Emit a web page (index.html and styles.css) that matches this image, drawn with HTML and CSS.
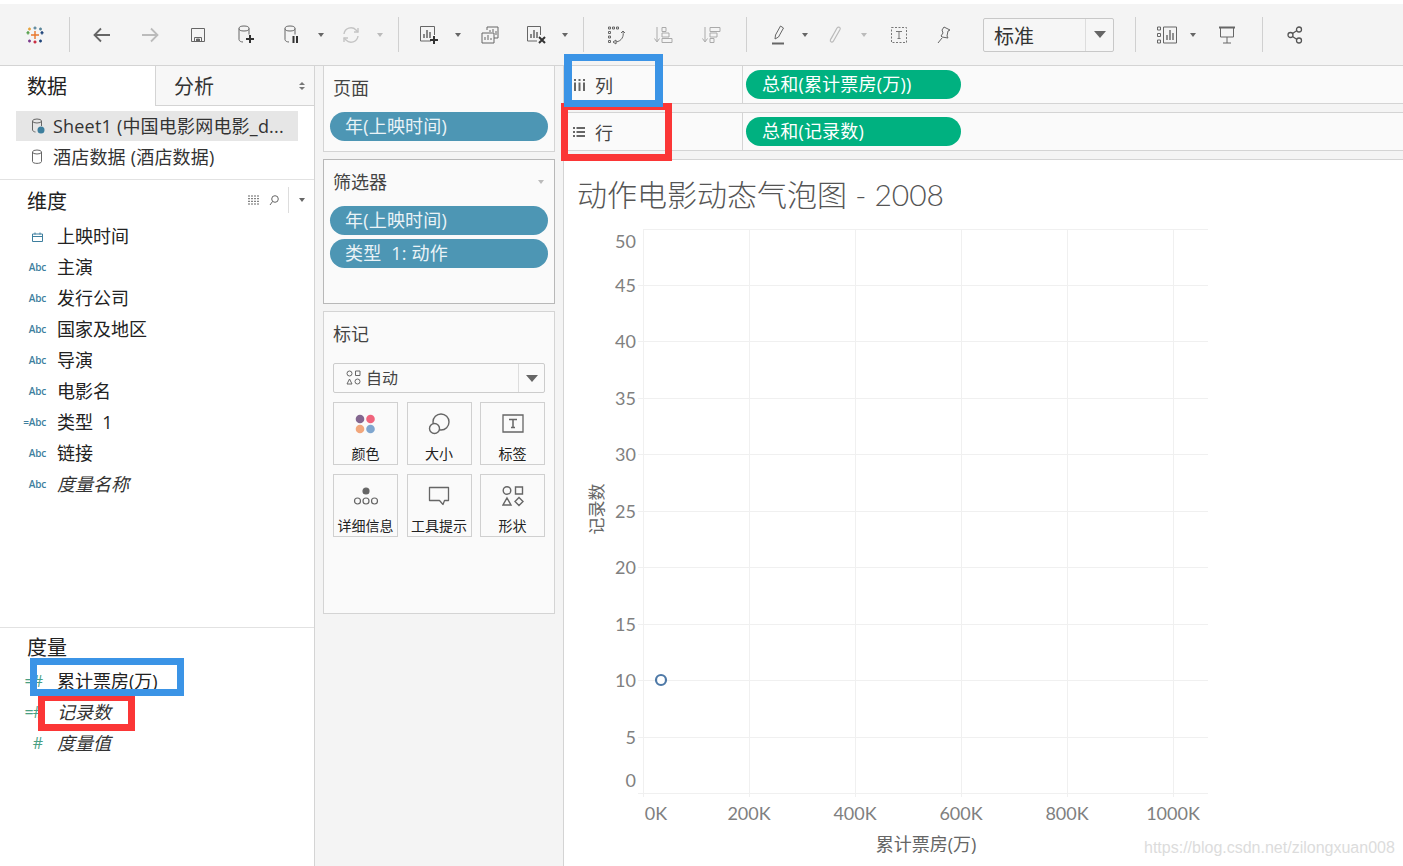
FILE: index.html
```html
<!DOCTYPE html>
<html lang="zh">
<head>
<meta charset="utf-8">
<title>动作电影动态气泡图 - 2008</title>
<link rel="stylesheet" href="styles.css">
</head>
<body>
<header class="toolbar">
  <span class="tb w48 first">
    <svg width="18" height="18" viewBox="0 0 18 18" fill="none" stroke-width="1.4"><path d="M9 5v8M5 9h8" stroke="#e8762b"/><path d="M9 0.5v3M7.5 2h3" stroke="#5b879b"/><path d="M9 14.500v3M7.500 16h3" stroke="#c72035"/><path d="M2 5v3.500M.5 6.700h3" stroke="#59a14f"/><path d="M16 5v3.500M14.500 6.700h3" stroke="#1f447a"/><path d="M3.500 1.500v3M2 3h3" stroke="#e8a33d"/><path d="M14.500 1.500v3M13 3h3" stroke="#5b879b"/><path d="M3.500 13.500v3M2 15h3" stroke="#7c3b8c"/><path d="M14.500 13.500v3M13 15h3" stroke="#1f447a"/></svg>
  </span>
  <i class="sep"></i>
  <span class="tb w48"><svg width="18" height="16" viewBox="0 0 18 16" fill="none" stroke="#666" stroke-width="1.800"><path d="M17 8H2M8 1.500 1.500 8 8 14.500"/></svg></span>
  <span class="tb w48"><svg width="18" height="16" viewBox="0 0 18 16" fill="none" stroke="#bbb" stroke-width="1.800"><path d="M1 8h15M10 1.500 16.500 8 10 14.500"/></svg></span>
  <span class="tb w48"><svg width="16" height="16" viewBox="0 0 16 16" fill="none" stroke="#666"><path d="M1.500 1.500h13v13h-13z"/><path d="M4.500 14.500v-4h7v4"/><path d="M6.500 12h3v2.500h-3z" fill="#666"/></svg></span>
  <span class="tb w48"><svg width="18" height="20" viewBox="0 0 18 20" fill="none" stroke="#666"><ellipse cx="7" cy="3.500" rx="5" ry="2.500"/><path d="M2 3.500v11c0 1.500 2 2.500 4 2.500M12 3.500v6"/><path d="M13 10v8M9 14h8" stroke="#333" stroke-width="2"/></svg></span>
  <span class="tb w43"><svg width="18" height="20" viewBox="0 0 18 20" fill="none" stroke="#666"><ellipse cx="7" cy="3.500" rx="5" ry="2.500"/><path d="M2 3.500v11c0 1.500 2 2.500 4 2.500M12 3.500v6"/><path d="M10.500 11v7M14 11v7" stroke="#333" stroke-width="2"/></svg></span>
  <span class="caret-slot"><i class="caret"></i></span>
  <span class="tb w43"><svg width="18" height="18" viewBox="0 0 18 18" fill="none" stroke="#c4c4c4" stroke-width="1.400"><path d="M2 8a7 7 0 0 1 12-4l2 2M16 10a7 7 0 0 1-12 4l-2-2"/><path d="M16 2v4h-4M2 16v-4h4"/></svg></span>
  <span class="caret-slot"><i class="caret light"></i></span>
  <i class="sep"></i>
  <span class="tb w43"><svg width="20" height="20" viewBox="0 0 20 20" fill="none" stroke="#666"><path d="M12 16H1.500V1.500h14V10"/><path d="M5 13V9M8 13V5M11 13V7" stroke-width="1.500"/><path d="M15 11v8M11 15h8" stroke="#333" stroke-width="2"/></svg></span>
  <span class="caret-slot"><i class="caret"></i></span>
  <span class="tb w48"><svg width="18" height="18" viewBox="0 0 18 18" fill="none" stroke="#666"><path d="M6 4V1h11v11h-4"/><path d="M1 7h12v10H1z" fill="#f4f4f4"/><path d="M9 6V4M12 6V3M15 9V5" stroke-width="1"/><path d="M4 14v-3M7 14v-5M10 14v-2"/></svg></span>
  <span class="tb w43"><svg width="20" height="20" viewBox="0 0 20 20" fill="none" stroke="#666"><path d="M11 16H1.500V1.500h13V10"/><path d="M5 13V9M8 13V5M11 13V7" stroke-width="1.500"/><path d="M13 12l6 6M19 12l-6 6" stroke="#333" stroke-width="2"/></svg></span>
  <span class="caret-slot"><i class="caret"></i></span>
  <i class="sep"></i>
  <span class="tb w48"><svg width="20" height="20" viewBox="0 0 20 20" fill="none" stroke="#666"><path d="M2.500 2h2v2h-2zM6.500 2h2v2h-2zM10.500 2h2v2h-2zM2.500 6.500h2v2h-2zM2.500 11h2v2h-2zM2.500 15.500h2v2h-2z"/><path d="M17 7c1 4-1 9-7 10M7 17l3-2v4z"/><path d="M15 8l2-2 2 2"/></svg></span>
  <span class="tb w48"><svg width="20" height="20" viewBox="0 0 20 20" fill="none" stroke="#aaa"><path d="M3 2v14M.5 13.500 3 17l2.500-3.500"/><path d="M8 2.500h4v4H8zM8 8h7v4H8zM8 13.500h10v4H8z"/></svg></span>
  <span class="tb w48"><svg width="20" height="20" viewBox="0 0 20 20" fill="none" stroke="#aaa"><path d="M3 2v14M.5 13.500 3 17l2.500-3.500"/><path d="M8 2.500h10v4H8zM8 8h7v4H8zM8 13.500h4v4H8z"/></svg></span>
  <i class="sep"></i>
  <span class="tb w38 ml4"><svg width="14" height="20" viewBox="0 0 14 20" fill="none" stroke="#666"><path d="M9.500 1l3 2-5 9-3.500 2 .5-4z"/><path d="M1 18.500h12" stroke-width="2"/></svg></span>
  <span class="caret-slot"><i class="caret"></i></span>
  <span class="tb w43"><svg width="14" height="20" viewBox="0 0 14 20" fill="none" stroke="#bbb" stroke-width="1.200"><path d="M3 14l6-11c1.500-2 4 -.5 3 1.500L5.500 16c-1 2-4 1-3-1.500L8 5"/></svg></span>
  <span class="caret-slot"><i class="caret light"></i></span>
  <span class="tb w54"><svg width="16" height="16" viewBox="0 0 16 16" fill="none" stroke="#777"><path d="M.5.500h15v15H.5z" stroke-dasharray="2 1.500"/><path d="M5 4.500h6M8 4.500v7M6.500 11.500h3"/></svg></span>
  <span class="tb w36"><svg width="14" height="18" viewBox="0 0 14 18" fill="none" stroke="#666"><path d="M7 1l6 3-2 1-1 5 1 2-6-1-1-1 2-3-1-3zM5 12l-4 5"/></svg></span>
  <div class="combo"><span class="combo-text">标准</span><span class="combo-arrow"><i class="caret big"></i></span></div>
  <i class="sep sep-wide"></i>
  <span class="tb w36 ml5"><svg width="20" height="18" viewBox="0 0 20 18" fill="none" stroke="#666"><path d="M.5 1h3v3h-3zM.5 7.500h3v3h-3zM.5 14h3v3h-3z"/><path d="M6.500 1h13v16h-13z"/><path d="M10 14V9M13 14V4M16 14V7" stroke-width="1.400"/></svg></span>
  <span class="caret-slot"><i class="caret"></i></span>
  <span class="tb w52"><svg width="18" height="18" viewBox="0 0 18 18" fill="none" stroke="#666"><path d="M1 1.500h16" stroke-width="2"/><path d="M2.500 2v9h13V2M9 11v6M5 17h8"/></svg></span>
  <i class="sep sep-9"></i>
  <span class="tb w48"><svg width="16" height="18" viewBox="0 0 16 18" fill="none" stroke="#555" stroke-width="1.300"><circle cx="3.500" cy="9" r="2.500"/><circle cx="12" cy="3.500" r="2.500"/><circle cx="12" cy="14.500" r="2.500"/><path d="M5.500 7.500l4.500-3M5.500 10.500l4.500 3"/></svg></span>
</header>

<main class="workspace">
  <aside class="data-pane">
    <div class="tabs">
      <div class="tab active">数据</div>
      <div class="tab inactive">分析<i class="updown"></i></div>
    </div>
    <div class="sources">
      <div class="source selected">
        <svg class="db" width="14" height="16" viewBox="0 0 14 16" fill="none" stroke="#666"><ellipse cx="6" cy="3" rx="4.500" ry="2"/><path d="M1.500 3v9c0 1 2 2 3 2M10.500 3v5"/><circle cx="10" cy="12" r="3.500" fill="#3e7f9e" stroke="none"/></svg>
        <span>Sheet1 (中国电影网电影_d...</span>
      </div>
      <div class="source">
        <svg class="db" width="14" height="16" viewBox="0 0 14 16" fill="none" stroke="#666"><ellipse cx="6" cy="3" rx="4.500" ry="2"/><path d="M1.500 3v9.500c0 2.500 9 2.500 9 0V3"/></svg>
        <span>酒店数据 (酒店数据)</span>
      </div>
    </div>
    <section class="dims">
      <div class="sec-head">
        <span>维度</span>
        <span class="sec-tools">
          <svg width="12" height="10" viewBox="0 0 12 10" fill="none" stroke="#666" stroke-dasharray="2 1"><path d="M0 1h12M0 3.700h12M0 6.300h12M0 9h12"/></svg>
          <svg width="10" height="11" viewBox="0 0 10 11" fill="none" stroke="#666"><circle cx="6" cy="4" r="3.300"/><path d="M3.500 6.500 1 10"/></svg>
          <i class="tool-sep"></i>
          <i class="caret"></i>
        </span>
      </div>
      <ul class="fields">
        <li><span class="ficon date"><svg width="11" height="10" viewBox="0 0 11 10" fill="none" stroke="#3e7f9e"><path d="M.5 2h10v7.500H.5zM.5 4.500h10M3 .5v2M8 .5v2"/></svg></span>上映时间</li>
        <li><span class="ficon abc">Abc</span>主演</li>
        <li><span class="ficon abc">Abc</span>发行公司</li>
        <li><span class="ficon abc">Abc</span>国家及地区</li>
        <li><span class="ficon abc">Abc</span>导演</li>
        <li><span class="ficon abc">Abc</span>电影名</li>
        <li><span class="ficon abc">=Abc</span>类型&nbsp;&nbsp;1</li>
        <li><span class="ficon abc">Abc</span>链接</li>
        <li class="calc"><span class="ficon abc">Abc</span>度量名称</li>
      </ul>
    </section>
    <section class="measures">
      <div class="sec-head short"><span>度量</span></div>
      <ul class="fields">
        <li><span class="ficon hash">=#</span>累计票房(万)</li>
        <li class="calc"><span class="ficon hash">=#</span>记录数</li>
        <li class="calc"><span class="ficon hash">#</span>度量值</li>
      </ul>
    </section>
  </aside>

  <section class="cards">
    <div class="card card-pages">
      <h3>页面</h3>
      <div class="pill blue">年(上映时间)</div>
    </div>
    <div class="card card-filters">
      <h3>筛选器<i class="caret light card-caret"></i></h3>
      <div class="pill blue">年(上映时间)</div>
      <div class="pill blue">类型&nbsp; 1: 动作</div>
    </div>
    <div class="card card-marks">
      <h3>标记</h3>
      <div class="mark-type">
        <span class="mark-name">
          <svg width="15" height="15" viewBox="0 0 15 15" fill="none" stroke="#666"><circle cx="3.500" cy="3.500" r="2.500"/><path d="M9.500 1h4.500v4.500H9.500zM3.500 9 6 14H1z"/><circle cx="11.500" cy="11.500" r="2.500"/></svg>
          自动
        </span>
        <span class="mark-arrow"><i class="caret big"></i></span>
      </div>
      <div class="mark-grid">
        <div class="mark-btn">
          <svg width="22" height="20" viewBox="0 0 22 20"><circle cx="5" cy="5" r="4.300" fill="#83668f"/><circle cx="15.500" cy="5" r="4.300" fill="#f0647c"/><circle cx="5" cy="15" r="4.300" fill="#f2a77c"/><circle cx="15.500" cy="15" r="4.300" fill="#7fa6cf"/></svg>
          <span>颜色</span>
        </div>
        <div class="mark-btn">
          <svg width="22" height="22" viewBox="0 0 22 22" fill="none" stroke="#666" stroke-width="1.400"><circle cx="13" cy="9" r="8"/><circle cx="6.500" cy="15.500" r="5" fill="#fafafa"/></svg>
          <span>大小</span>
        </div>
        <div class="mark-btn">
          <svg width="22" height="20" viewBox="0 0 22 20" fill="none" stroke="#666" stroke-width="1.300"><path d="M1 1h20v17H1z"/><path d="M7 5.500h8M11 5.500v8M9 13.500h4" stroke-width="1.500"/></svg>
          <span>标签</span>
        </div>
        <div class="mark-btn">
          <svg width="26" height="20" viewBox="0 0 26 20" fill="none" stroke="#666" stroke-width="1.200"><circle cx="13" cy="5" r="3" fill="#666"/><circle cx="4.500" cy="15" r="3"/><circle cx="13" cy="15" r="3"/><circle cx="21.500" cy="15" r="3"/></svg>
          <span>详细信息</span>
        </div>
        <div class="mark-btn">
          <svg width="22" height="20" viewBox="0 0 22 20" fill="none" stroke="#666" stroke-width="1.300"><path d="M1.500 1.500h19v13h-4l-1.500 4-3.500-4h-10z" stroke-linejoin="round"/></svg>
          <span>工具提示</span>
        </div>
        <div class="mark-btn">
          <svg width="22" height="21" viewBox="0 0 22 21" fill="none" stroke="#666" stroke-width="1.400"><circle cx="5" cy="5" r="3.800"/><path d="M13.500 1.500h7v7h-7zM5 12.500l4 7H1zM17 12l4 4-4 4-4-4z"/></svg>
          <span>形状</span>
        </div>
      </div>
    </div>
  </section>

  <section class="view">
    <div class="shelf shelf-cols">
      <div class="shelf-label">
        <svg width="11" height="12" viewBox="0 0 11 12" fill="#666"><path d="M0 0h2v2H0zM0 3.500h2V12H0zM4.500 0h2v2h-2zM4.500 3.500h2V12h-2zM9 0h2v2H9zM9 3.500h2V12H9z"/></svg>
        <span>列</span>
      </div>
      <div class="shelf-body"><div class="pill green">总和(累计票房(万))</div></div>
    </div>
    <div class="shelf shelf-rows">
      <div class="shelf-label">
        <svg width="12" height="10" viewBox="0 0 12 10" fill="#666"><path d="M0 0h2v2H0zM3.500 0H12v2H3.500zM0 4h2v2H0zM3.500 4H12v2H3.500zM0 8h2v2H0zM3.500 8H12v2H3.500z"/></svg>
        <span>行</span>
      </div>
      <div class="shelf-body"><div class="pill green">总和(记录数)</div></div>
    </div>
    <div class="chart">
      <svg class="chart-svg" width="839" height="706" viewBox="564 160 839 706">
        <text class="title" x="577" y="206">动作电影动态气泡图 - 2008</text>
        <g class="grid">
          <path d="M643.500 229V797M749.500 229V797M855.500 229V797M961.500 229V797M1067.500 229V797M1173.500 229V797"/>
          <path d="M643 229.500H1208M638 285.500H1208M638 341.500H1208M638 398.500H1208M638 454.500H1208M638 511.500H1208M638 567.500H1208M638 624.500H1208M638 680.500H1208M638 737.500H1208M638 793.500H1208"/>
        </g>
        <g class="ylabels">
          <text x="636" y="248">50</text><text x="636" y="292">45</text><text x="636" y="348">40</text>
          <text x="636" y="405">35</text><text x="636" y="461">30</text><text x="636" y="518">25</text>
          <text x="636" y="574">20</text><text x="636" y="631">15</text><text x="636" y="687">10</text>
          <text x="636" y="744">5</text><text x="636" y="787">0</text>
        </g>
        <g class="xlabels">
          <text x="656" y="820">0K</text><text x="749" y="820">200K</text><text x="855" y="820">400K</text>
          <text x="961" y="820">600K</text><text x="1067" y="820">800K</text><text x="1173" y="820">1000K</text>
        </g>
        <text class="axis-title" x="926" y="851">累计票房(万)</text>
        <text class="axis-title y" transform="translate(603 509) rotate(-90)">记录数</text>
        <circle class="point" cx="661" cy="680" r="5"/>
        <text class="watermark" x="1144" y="853">https://blog.csdn.net/zilongxuan008</text>
      </svg>
    </div>
  </section>
</main>

<div class="note note-red note-r1"></div>
<div class="note note-blue note-b1"></div>
<div class="note note-red note-r2"></div>
<div class="note note-blue note-b2"></div>
</body>
</html>
```

FILE: styles.css
```css
* { box-sizing: border-box; }
html, body { margin: 0; padding: 0; }
body {
  width: 1403px;
  height: 866px;
  overflow: hidden;
  position: relative;
  background: #fff;
  color: #222;
  font-family: "Open Sans", "Noto Sans CJK SC", sans-serif;
  font-size: 18px;
}
ul { list-style: none; margin: 0; padding: 0; }
h3 { margin: 0; font-weight: 400; }
i { display: block; font-style: normal; }

/* toolbar */
.toolbar {
  height: 66px;
  border-top: 4px solid #fff;
  border-bottom: 1px solid #d4d4d4;
  background: #f4f4f4;
  display: flex;
  align-items: center;
  padding-left: 11px;
}
.tb { display: flex; align-items: center; justify-content: center; height: 36px; flex: none; }
.tb svg { display: block; }
.w36 { width: 36px; } .w38 { width: 38px; } .w43 { width: 43px; }
.w48 { width: 48px; } .w52 { width: 52px; } .w54 { width: 54px; }
.ml4 { margin-left: 4px; } .ml5 { margin-left: 5px; }
.sep { width: 1px; height: 35px; background: #d0d0d0; margin: 0 8px 0 10px; flex: none; }
.sep-wide { margin-left: 21px; }
.sep-9 { margin-left: 9px; }
.caret-slot { width: 16px; display: flex; justify-content: center; flex: none; }
.caret { width: 0; height: 0; border-left: 3px solid transparent; border-right: 3px solid transparent; border-top: 4px solid #666; }
.caret.light { border-top-color: #bbb; }
.caret.big { border-left-width: 6px; border-right-width: 6px; border-top-width: 7px; }
.combo {
  width: 131px; height: 34px; margin-left: 21px; flex: none;
  display: flex; border: 1px solid #c8c8c8; border-radius: 2px; background: #f6f6f6;
}
.combo-text { flex: 1; padding-left: 10px; font-size: 20px; line-height: 36px; color: #333; }
.combo-arrow { width: 28px; border-left: 1px solid #ddd; display: flex; align-items: center; justify-content: center; }

/* workspace */
.workspace { display: grid; grid-template-columns: 315px 249px 1fr; height: 800px; }

/* data pane */
.data-pane { border-right: 1px solid #d4d4d4; display: flex; flex-direction: column; }
.tabs { display: flex; height: 40px; }
.tab { font-size: 20px; line-height: 42px; }
.tab.active { width: 155px; padding-left: 27px; color: #222; }
.tab.inactive {
  flex: 1; padding-left: 18px; background: #f7f7f7;
  border-left: 1px solid #d4d4d4; border-bottom: 1px solid #d4d4d4;
  position: relative; color: #333;
}
.updown {
  position: absolute; right: 9px; top: 16px; width: 0; height: 0;
  border-left: 3px solid transparent; border-right: 3px solid transparent;
  border-bottom: 3px solid #777;
}
.updown::after {
  content: ""; position: absolute; left: -3px; top: 5px; width: 0; height: 0;
  border-left: 3px solid transparent; border-right: 3px solid transparent;
  border-top: 3px solid #777;
}
.sources { height: 74px; padding: 5px 16px 0; border-bottom: 1px solid #e2e2e2; }
.source { height: 30px; margin-bottom: 1px; display: flex; align-items: center; gap: 8px; padding-left: 15px; width: 282px; line-height: 30px; color: #333; white-space: nowrap; letter-spacing: .2px; }
.source.selected { background: #e6e6e6; }
.db { flex: none; }
.dims { height: 448px; border-bottom: 1px solid #e2e2e2; }
.dims .fields { margin-top: 1px; }
.sec-head { height: 40px; display: flex; justify-content: space-between; align-items: center; padding-left: 27px; font-size: 20px; }
.sec-tools { display: flex; align-items: center; gap: 9px; padding-right: 9px; }
.tool-sep { width: 1px; height: 26px; background: #ddd; margin-right: 1px; }
.fields li { height: 31px; line-height: 31px; display: flex; align-items: center; white-space: nowrap; color: #222; }
.fields li.calc { font-style: italic; color: #333; }
.ficon { width: 57px; padding-right: 14px; display: flex; justify-content: flex-end; flex: none; font-style: normal; }
.ficon.abc { font-family: "Open Sans", sans-serif; font-size: 10px; color: #3e7f9e; font-weight: 600; padding-right: 11px; letter-spacing: -.2px; }
.ficon.hash { color: #4a9f83; font-size: 16px; padding-right: 15px; letter-spacing: -1px; }
.sec-head.short { height: 38px; padding-bottom: 2px; }

/* cards */
.cards { background: #f4f4f4; border-right: 1px solid #d4d4d4; padding: 0 8px; display: flex; flex-direction: column; gap: 7px; }
.card { border: 1px solid #d4d4d4; background: #fafafa; padding: 0 6px; position: relative; }
.card h3 { font-size: 18px; line-height: 30px; padding: 7px 3px 0; color: #444; }
.card-pages { height: 86px; border-top: 0; }
.card-filters { height: 145px; border-color: #b8b8b8; }
.card-filters h3 { margin-bottom: 9px; }
.card-pages h3 { margin-bottom: 9px; }
.card-marks { height: 303px; }
.card-marks h3 { padding-top: 7px; margin-bottom: 14px; }
.card-caret { position: absolute; right: 10px; top: 20px; }
.pill { height: 29px; border-radius: 15px; color: #fff; font-size: 18px; line-height: 28px; white-space: nowrap; letter-spacing: .2px; }
.pill.blue { width: 218px; background: #4d96b4; padding-left: 15px; margin-bottom: 4px; color: #eaf3f7; }
.pill.green { width: 215px; background: #00b180; padding-left: 16px; }
.mark-type {
  width: 212px; height: 30px; margin-left: 3px; display: flex;
  border: 1px solid #ccc; border-radius: 2px; background: #fafafa;
}
.mark-name { flex: 1; display: flex; align-items: center; gap: 5px; padding: 0 0 2px 12px; font-size: 16px; color: #444; }
.mark-arrow { width: 26px; border-left: 1px solid #ddd; display: flex; align-items: center; justify-content: center; }
.mark-grid { margin: 9px 0 0 3px; display: grid; grid-template-columns: 65px 65px 65px; column-gap: 8.500px; row-gap: 9px; }
.mark-btn {
  height: 63px; border: 1px solid #d0d0d0; display: flex; flex-direction: column;
  align-items: center; padding-top: 10px; background: #fafafa;
}
.mark-btn svg { height: 22px; flex: none; }
.mark-btn span { font-size: 14px; line-height: 20px; margin-top: 9px; color: #222; white-space: nowrap; }

/* view */
.view { display: flex; flex-direction: column; background: #f4f4f4; }
.shelf { display: flex; background: #fafafa; border-bottom: 1px solid #d4d4d4; flex: none; }
.shelf-cols { height: 38px; }
.shelf-rows { height: 39px; margin-top: 8px; border-top: 1px solid #d4d4d4; }
.shelf-label {
  width: 179px; display: flex; align-items: center; gap: 10px; padding-left: 10px;
  border-right: 1px solid #d4d4d4; color: #444;
}
.shelf-rows .shelf-label { padding-left: 9px; }
.shelf-body { flex: 1; padding: 4px 0 0 3px; }
.chart { margin-top: 8px; flex: 1; background: #fff; border-top: 1px solid #d4d4d4; }
.chart-svg { display: block; }
.title { font-family: "Lato", "Noto Sans CJK SC", sans-serif; font-weight: 300; font-size: 30px; fill: #555; }
.grid path { fill: none; stroke: #f0f0f0; stroke-width: 1; }
.ylabels text { font-family: "Lato", sans-serif; font-size: 18px; fill: #808080; text-anchor: end; }
.xlabels text { font-family: "Lato", sans-serif; font-size: 18px; fill: #808080; text-anchor: middle; }
.axis-title { font-size: 18px; fill: #666; text-anchor: middle; }
.axis-title.y { font-size: 17px; }
.point { fill: #fff; stroke: #4e79a7; stroke-width: 2.200; }
.watermark { font-family: "Liberation Sans", sans-serif; font-size: 16px; fill: #dcdcdc; }

/* hand-drawn annotation boxes lying over the screenshot */
.note { position: absolute; border-style: solid; }
.note-blue { border-color: #3b94e6; }
.note-red { border-color: #fb3636; }
.note-b1 { left: 564px; top: 54px; width: 99px; height: 53px; border-width: 7px 8px; }
.note-r1 { left: 561px; top: 103px; width: 111px; height: 58px; border-width: 7px; }
.note-b2 { left: 30px; top: 658px; width: 154px; height: 38px; border-width: 7px; }
.note-r2 { left: 38px; top: 696px; width: 97px; height: 35px; border-width: 5px 7px 7px; }
```
